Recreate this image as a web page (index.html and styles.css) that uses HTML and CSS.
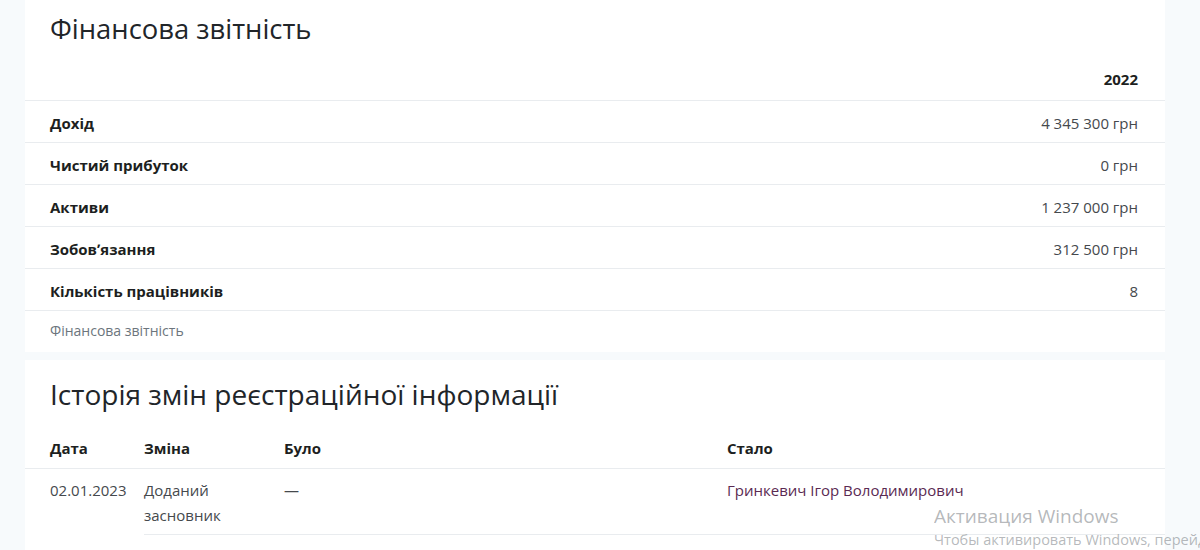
FILE: index.html
```html
<!DOCTYPE html>
<html lang="uk">
<head>
<meta charset="utf-8">
<title>Фінансова звітність</title>
<link rel="stylesheet" href="styles.css">
</head>
<body>
<div class="page">
  <section class="card card-fin">
    <h2 class="card-title">Фінансова звітність</h2>
    <table class="fin-table">
      <thead>
        <tr><th></th><th class="num">2022</th></tr>
      </thead>
      <tbody>
        <tr><th>Дохід</th><td class="num">4 345 300 грн</td></tr>
        <tr><th>Чистий прибуток</th><td class="num">0 грн</td></tr>
        <tr><th>Активи</th><td class="num">1 237 000 грн</td></tr>
        <tr><th>Зобовʼязання</th><td class="num">312 500 грн</td></tr>
        <tr><th>Кількість працівників</th><td class="num">8</td></tr>
      </tbody>
    </table>
    <div class="caption">Фінансова звітність</div>
  </section>

  <section class="card card-hist">
    <h2 class="card-title title-hist">Історія змін реєстраційної інформації</h2>
    <table class="hist-table">
      <colgroup>
        <col class="c-date"><col class="c-change"><col class="c-was"><col class="c-now">
      </colgroup>
      <thead>
        <tr><th>Дата</th><th>Зміна</th><th>Було</th><th>Стало</th></tr>
      </thead>
      <tbody>
        <tr>
          <td rowspan="2" class="date">02.01.2023</td>
          <td>Доданий засновник</td>
          <td>—</td>
          <td><a href="#" class="link">Гринкевич Ігор Володимирович</a></td>
        </tr>
        <tr>
          <td>Доданий засновник</td>
          <td>—</td>
          <td><a href="#" class="link">Гринкевич Ігор Володимирович</a></td>
        </tr>
      </tbody>
    </table>
  </section>
</div>
<div class="watermark">
  <div class="wm-title">Активация Windows</div>
  <div class="wm-sub">Чтобы активировать Windows, перейдите в раздел «Параметры».</div>
</div>
</body>
</html>
```

FILE: styles.css
```css
html, body {
  margin: 0;
  padding: 0;
}
body {
  background: #f7fafc;
  font-family: "Open Sans", "Liberation Sans", sans-serif;
  color: #212529;
  overflow: hidden;
  height: 550px;
  position: relative;
}
.page {
  width: 1140px;
  margin-left: 25px;
  display: flex;
  flex-direction: column;
  gap: 8px;
}
.card {
  background: #fff;
}
.card-title {
  margin: 0;
  font-weight: 400;
  font-size: 27.4px;
  line-height: 36px;
  color: #212529;
  padding: 11px 25px 0;
}
.fin-table, .hist-table {
  width: 100%;
  border-collapse: collapse;
  font-size: 15px;
}
.fin-table th, .fin-table td {
  text-align: left;
  padding: 3px 27px 0 25px;
  height: 38px;
  border-top: 1px solid #e9ecef;
  vertical-align: middle;
  font-weight: 700;
  color: #1d1f21;
}
.fin-table td {
  font-weight: 400;
  color: #45494d;
}
.fin-table thead th {
  border-top: none;
  height: 53px;
  padding-top: 12px;
  box-sizing: border-box;
}
.fin-table .num {
  text-align: right;
}
.fin-table tbody tr:last-child th,
.fin-table tbody tr:last-child td {
  border-bottom: 1px solid #e9ecef;
}
.caption {
  font-size: 14px;
  color: #6c757d;
  padding: 10px 25px 11px;
  line-height: 20px;
}
.title-hist {
  padding-top: 16px;
  font-size: 28px;
}
.hist-table {
  margin-top: 24px;
  table-layout: fixed;
}
.c-date { width: 119px; }
.c-change { width: 140px; }
.c-was { width: 443px; }
.hist-table th, .hist-table td {
  text-align: left;
  vertical-align: top;
  line-height: 25px;
}
.hist-table th {
  font-weight: 700;
  padding: 0 0 7px 0;
  color: #1d1f21;
}
.hist-table th:first-child,
.hist-table td.date {
  padding-left: 25px;
}
.hist-table td {
  padding: 9px 0 6px 0;
  color: #45494d;
  border-top: 1px solid #e9ecef;
}
.link {
  color: #5a2a52;
  text-decoration: none;
}
.watermark {
  position: absolute;
  left: 934px;
  right: 0;
  top: 504px;
  overflow: hidden;
  color: rgba(120, 125, 130, 0.55);
  font-family: "Open Sans", "Liberation Sans", sans-serif;
  white-space: nowrap;
  pointer-events: none;
}
.wm-title {
  font-size: 19px;
  line-height: 25px;
}
.wm-sub {
  font-size: 14.5px;
  line-height: 21px;
}
```
